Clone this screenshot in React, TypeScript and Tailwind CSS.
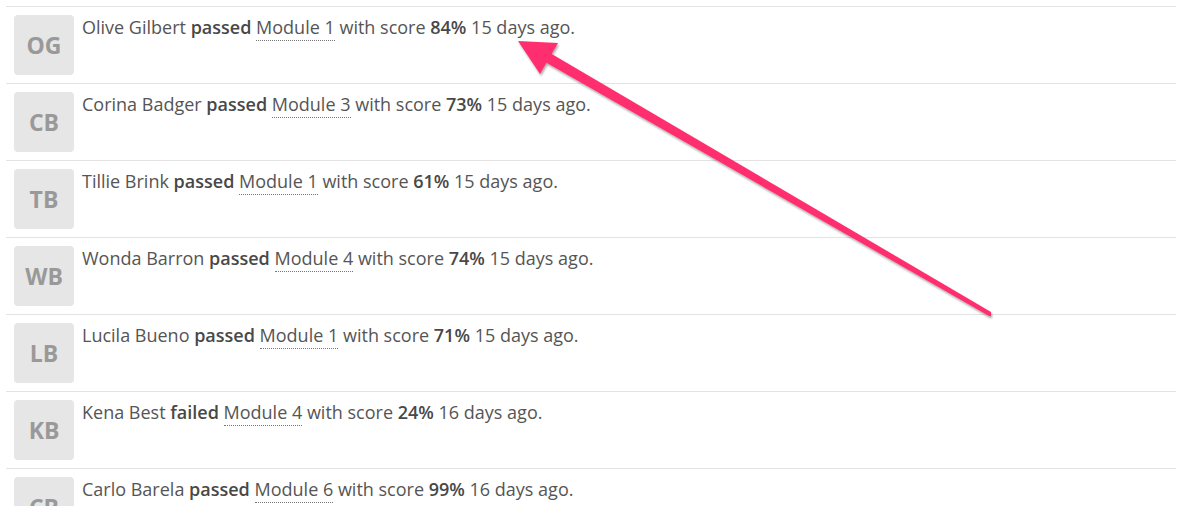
import React from "react";

type Activity = {
  initials: string;
  name: string;
  result: "passed" | "failed";
  module: string;
  score: number;
  days: number;
};

const activities: Activity[] = [
  { initials: "OG", name: "Olive Gilbert", result: "passed", module: "Module 1", score: 84, days: 15 },
  { initials: "CB", name: "Corina Badger", result: "passed", module: "Module 3", score: 73, days: 15 },
  { initials: "TB", name: "Tillie Brink", result: "passed", module: "Module 1", score: 61, days: 15 },
  { initials: "WB", name: "Wonda Barron", result: "passed", module: "Module 4", score: 74, days: 15 },
  { initials: "LB", name: "Lucila Bueno", result: "passed", module: "Module 1", score: 71, days: 15 },
  { initials: "KB", name: "Kena Best", result: "failed", module: "Module 4", score: 24, days: 16 },
  { initials: "CB", name: "Carlo Barela", result: "passed", module: "Module 6", score: 99, days: 16 },
];

function ActivityRow({ item }: { item: Activity }) {
  return (
    <div className="flex gap-2 border-t border-[#e3e3e3] py-2 px-2">
      <div className="flex h-[60px] w-[60px] shrink-0 items-center justify-center rounded-[4px] bg-[#e6e6e6] text-[23px] font-bold text-[#999]">
        {item.initials}
      </div>
      <p className="text-[18px] leading-6 text-[#555]">
        {item.name} <b className="font-semibold text-[#484848]">{item.result}</b>{" "}
        <a className="border-b border-dotted border-[#777] pb-[1px] cursor-pointer">
          {item.module}
        </a>{" "}
        with score <b className="font-semibold text-[#484848]">{item.score}%</b>{" "}
        {item.days} days ago.
      </p>
    </div>
  );
}

function Arrow() {
  return (
    <svg
      className="pointer-events-none absolute left-0 top-0"
      width="1187"
      height="506"
      viewBox="0 0 1187 506"
    >
      <defs>
        <filter id="shadow" x="-10%" y="-10%" width="120%" height="120%">
          <feDropShadow dx="1" dy="2" stdDeviation="1.2" floodColor="#000" floodOpacity="0.35" />
        </filter>
      </defs>
      <g filter="url(#shadow)" fill="#ff2f6e">
        {/* shaft, tapering towards the tail */}
        <polygon points="550,53 991,312 991,316 989,316 545,62" />
        {/* head */}
        <polygon points="518,41 558,43 540,74" />
      </g>
    </svg>
  );
}

export default function App() {
  return (
    <div
      className="relative h-[506px] w-[1187px] overflow-hidden bg-white"
      style={{ fontFamily: "'Open Sans', 'Noto Sans', sans-serif" }}
    >
      <div className="ml-[6px] mt-[6px] w-[1170px]">
        {activities.map((item, i) => (
          <ActivityRow key={i} item={item} />
        ))}
      </div>
      <Arrow />
    </div>
  );
}
